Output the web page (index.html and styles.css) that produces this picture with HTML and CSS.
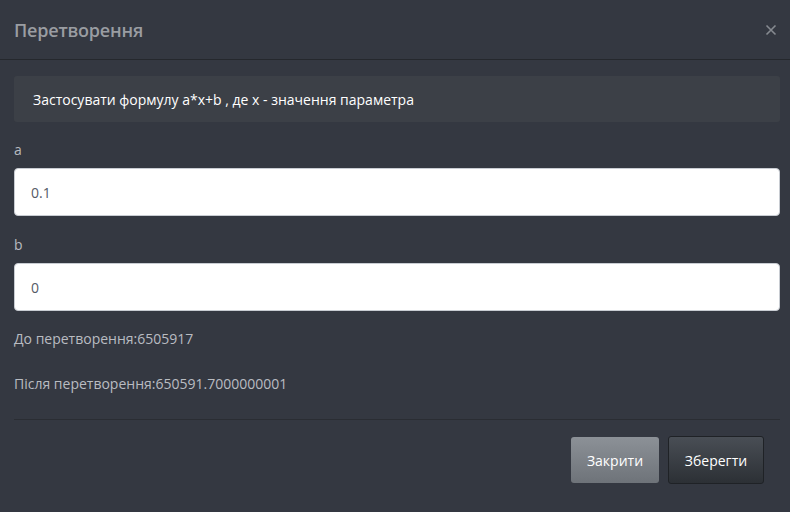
FILE: index.html
```html
<!DOCTYPE html>
<html lang="uk">
<head>
<meta charset="utf-8">
<link rel="stylesheet" href="styles.css">
</head>
<body>
<div class="modal">
  <div class="modal-header">
    <h4 class="modal-title">Перетворення</h4>
    <button class="close" type="button" aria-label="close">
      <svg width="12" height="12" viewBox="0 0 12 12"><path d="M1.5 1.5 L10.5 10.5 M10.5 1.5 L1.5 10.5" stroke="#868a90" stroke-width="1.6" fill="none"/></svg>
    </button>
  </div>
  <div class="modal-body">
    <div class="info">Застосувати формулу a*x+b , де x - значення параметра</div>
    <label class="label">a</label>
    <input class="input" type="text" value="0.1">
    <label class="label">b</label>
    <input class="input" type="text" value="0">
    <p class="result">До перетворення:6505917</p>
    <p class="result">Після перетворення:650591.7000000001</p>
  </div>
  <div class="modal-footer">
    <button class="btn btn-light" type="button">Закрити</button>
    <button class="btn btn-dark" type="button">Зберегти</button>
  </div>
</div>
</body>
</html>
```
FILE: styles.css
```css
html, body {
  margin: 0;
  padding: 0;
  background: #343841;
  width: 790px;
  height: 512px;
  overflow: hidden;
}
body {
  font-family: "Open Sans", "Noto Sans", sans-serif;
  color: #b9bcc1;
}
.modal {
  display: flex;
  flex-direction: column;
}
.modal-header {
  height: 59px;
  border-bottom: 1px solid #25282d;
  display: flex;
  align-items: center;
  justify-content: space-between;
  padding: 0 13px 0 14px;
}
.modal-title {
  margin: 0;
  font-size: 18px;
  font-weight: 600;
  color: #9a9da2;
  letter-spacing: -0.2px;
}
.close {
  background: none;
  border: 0;
  padding: 0;
  width: 12px;
  height: 12px;
  display: flex;
}
.modal-body {
  padding: 16px 10px 0 14px;
  display: flex;
  flex-direction: column;
}
.info {
  background: #3c4047;
  border-radius: 3px;
  height: 46px;
  display: flex;
  align-items: center;
  padding-left: 19px;
  font-size: 14px;
  color: #ffffff;
  margin-bottom: 18px;
}
.label {
  font-size: 14px;
  line-height: 20px;
  color: #b8bbc0;
  margin-bottom: 8px;
}
.input {
  box-sizing: border-box;
  height: 48px;
  width: 766px;
  border: 1px solid #c8ccd2;
  border-radius: 4px;
  background: #fff;
  padding: 0 16px;
  font-family: "Open Sans", sans-serif;
  font-size: 14px;
  color: #555a66;
  margin-bottom: 19px;
}
.result {
  margin: -1px 0 25px 0;
  font-size: 14px;
  line-height: 20px;
  color: #b9bcc1;
}
.result + .result {
  margin-top: 0;
  margin-bottom: 0;
}
.modal-footer {
  margin: 25px 10px 0 14px;
  border-top: 1px solid #2a2d33;
  padding: 16px 16px 0 0;
  display: flex;
  justify-content: flex-end;
  gap: 9px;
}
.btn {
  font-family: "Open Sans", sans-serif;
  font-size: 14px;
  color: #fff;
  border-radius: 3px;
  height: 47px;
  cursor: pointer;
}
.btn-light {
  width: 88px;
  border: 0;
  margin-top: 1px;
  height: 46px;
  background: linear-gradient(#8c9197, #6e7379);
}
.btn-dark {
  width: 96px;
  height: 48px;
  border: 1px solid #1f2226;
  background: linear-gradient(#494e55, #2c3035);
}
```
